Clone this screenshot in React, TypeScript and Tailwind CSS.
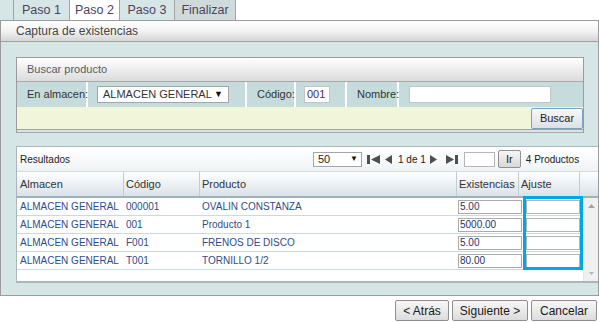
import React from 'react';

const tabs = [
  { label: 'Paso 1', w: 'w-[56px]', bg: '' },
  { label: 'Paso 2', w: 'w-[50px]', bg: 'bg-white' },
  { label: 'Paso 3', w: 'w-[55px]', bg: '' },
  { label: 'Finalizar', w: 'w-[62px] border-r', bg: 'bg-[#cfdbdb]' },
];

const rows = [
  { almacen: 'ALMACEN GENERAL', codigo: '000001', producto: 'OVALIN CONSTANZA', existencias: '5.00' },
  { almacen: 'ALMACEN GENERAL', codigo: '001', producto: 'Producto 1', existencias: '5000.00' },
  { almacen: 'ALMACEN GENERAL', codigo: 'F001', producto: 'FRENOS DE DISCO', existencias: '5.00' },
  { almacen: 'ALMACEN GENERAL', codigo: 'T001', producto: 'TORNILLO 1/2', existencias: '80.00' },
];

const Tri = ({ dir }: { dir: 'l' | 'r' }) => (
  <svg width="7" height="9" viewBox="0 0 7 9">
    <path d={dir === 'l' ? 'M7 0 L0 4.5 L7 9 Z' : 'M0 0 L7 4.5 L0 9 Z'} fill="#4f4f4f" />
  </svg>
);

const BtnGray = ({ children, w }: { children: React.ReactNode; w: string }) => (
  <button className={`${w} h-[21px] rounded-[2px] border border-[#8e8e8e] bg-linear-to-b from-[#f8f8f8] to-[#dcdcdc] text-[12px] text-[#1a1a1a] flex items-center justify-center`}>
    {children}
  </button>
);

export default function App() {
  return (
    <div className="w-[599px] h-[322px] overflow-hidden bg-white font-['Liberation_Sans',Arial,sans-serif] text-[11px] text-[#333]">
      {/* pestañas */}
      <div className="flex h-[20px]">
        <div className="flex bg-[#d6e5e5] pl-[13px]">
          {tabs.map((t) => (
            <div
              key={t.label}
              className={`${t.w} ${t.bg} h-[20px] flex items-center justify-center border-l border-[#a3a3a3] text-[12.5px] text-[#4d4360]`}
            >
              {t.label}
            </div>
          ))}
        </div>
      </div>

      {/* panel principal */}
      <div className="w-[599px] h-[276px] border border-[#9b9b9b] bg-[#d6e5e5] flex flex-col overflow-hidden">
        <div className="h-[21px] shrink-0 border-b border-[#a0a0a0] bg-linear-to-b from-white via-[#f3f3f3] to-[#d5d5d5] flex items-center pl-[15px] text-[12px] text-[#454545]">
          Captura de existencias
        </div>

        <div className="flex-1 pl-[15px] pt-[15px]">
          {/* Buscar producto */}
          <div className="w-[568px] border-x border-t border-[#9c9c9c]">
            <div className="h-[24px] border-b border-[#a8a8a8] bg-linear-to-b from-white to-[#dcdcdc] flex items-center pl-[10px] text-[11px] text-[#5a5a68]">
              Buscar producto
            </div>
            <div className="h-[25px] flex bg-[#c6dcdc] text-[11px] text-[#333] whitespace-nowrap">
              <div className="w-[71px] border-r-2 border-white flex items-center pl-[10px]">En almacen:</div>
              <div className="w-[159px] border-r-2 border-white flex items-center pl-[9px]">
                <div className="w-[132px] h-[17px] bg-white border border-[#a5a5a5] flex items-center justify-between pl-[5px] pr-[5px]">
                  <span>ALMACEN GENERAL</span>
                  <span className="text-[9px] text-[#111]">▼</span>
                </div>
              </div>
              <div className="w-[49px] border-r-2 border-white flex items-center pl-[10px]">Código:</div>
              <div className="w-[51px] border-r-2 border-white flex items-center pl-[8px]">
                <div className="w-[26px] h-[17px] bg-white border border-[#c4c4c4] flex items-center pl-[2px] text-[#3d2b6b]">001</div>
              </div>
              <div className="w-[52px] border-r-2 border-white flex items-center pl-[10px]">Nombre:</div>
              <div className="flex-1 flex items-center pl-[10px]">
                <div className="w-[142px] h-[17px] bg-white border border-[#c4c4c4]" />
              </div>
            </div>
            <div className="h-[23px] border-b border-[#a0a0a0] bg-[#f1f6da] flex justify-end items-start pt-[1px]">
              <button className="w-[52px] h-[21px] border border-[#7f9fc2] rounded-[2px] bg-linear-to-b from-[#f8f8f8] to-[#dde1e6] text-[11px] text-[#222] flex items-center justify-center">
                Buscar
              </button>
            </div>
            <div className="h-[3px] border-b border-[#a8a8a8]" />
          </div>

          {/* Resultados */}
          <div className="mt-[13px] w-[582px] border-l border-t border-b-2 border-[#a9b7bd] bg-white">
            <div className="h-[25px] flex items-center border-b border-[#d3dbe0] bg-linear-to-b from-white to-[#f0f3f5] text-[10px] text-[#222]">
              <div className="w-[296px] pl-[3px]">Resultados</div>
              <div className="w-[49px] h-[15px] border border-[#a5a5a5] bg-white flex items-center justify-between pl-[4px] pr-[3px] text-[11px]">
                <span>50</span>
                <span className="text-[8px] text-[#111]">▼</span>
              </div>
              <div className="ml-[5px] flex items-center">
                <div className="w-[3px] h-[9px] bg-[#4f4f4f]" />
                <div className="ml-[1px]">
                  <svg width="9" height="9" viewBox="0 0 9 9"><path d="M9 0 L0 4.5 L9 9 Z" fill="#4f4f4f" /></svg>
                </div>
              </div>
              <div className="ml-[5px]"><Tri dir="l" /></div>
              <span className="ml-[6px]">1 de 1</span>
              <div className="ml-[4px]"><Tri dir="r" /></div>
              <div className="ml-[9px] flex items-center">
                <svg width="8" height="9" viewBox="0 0 8 9"><path d="M0 0 L8 4.5 L0 9 Z" fill="#4f4f4f" /></svg>
                <div className="ml-[1px] w-[3px] h-[9px] bg-[#4f4f4f]" />
              </div>
              <div className="ml-[6px] w-[31px] h-[15px] border border-[#b5b5b5] bg-white" />
              <button className="ml-[3px] w-[23px] h-[18px] border border-[#909090] rounded-[2px] bg-linear-to-b from-[#f6f6f6] to-[#d9d9d9] text-[11px] text-[#222] flex items-center justify-center">
                Ir
              </button>
              <span className="ml-[5px]">4 Productos</span>
            </div>

            <div className="h-[26px] flex border-b-2 border-[#9fb2bb] bg-linear-to-b from-white to-[#dae2e8] text-[11px] text-[#333]">
              <div className="w-[107px] border-r border-[#c2ccd3] flex items-center pl-[3px]">Almacen</div>
              <div className="w-[76px] border-r border-[#c2ccd3] flex items-center pl-[2px]">Código</div>
              <div className="w-[257px] border-r border-[#c2ccd3] flex items-center pl-[2px]">Producto</div>
              <div className="w-[62px] border-r border-[#c2ccd3] flex items-center pl-[2px]">Existencias</div>
              <div className="w-[61px] border-r border-[#c2ccd3] flex items-center pl-[2px]">Ajuste</div>
            </div>

            <div className="relative flex h-[83px]">
              <div className="w-[566px]">
                {rows.map((r) => (
                  <div key={r.codigo} className="h-[18px] flex items-center border-b border-[#c9dae4] text-[10px] text-[#2d4c8e] whitespace-nowrap">
                    <div className="w-[107px] shrink-0 pl-[3px]">{r.almacen}</div>
                    <div className="w-[76px] shrink-0 pl-[2px]">{r.codigo}</div>
                    <div className="w-[257px] shrink-0 pl-[2px]">{r.producto}</div>
                    <div className="w-[62px] shrink-0 pl-[1px]">
                      <div className="w-[64px] h-[14px] border border-[#ababab] bg-white flex items-center pl-[1px] text-[#1f3366]">
                        {r.existencias}
                      </div>
                    </div>
                    <div className="w-[61px] shrink-0 pl-[7px]">
                      <div className="w-[54px] h-[14px] border border-[#b3b3b3] bg-white" />
                    </div>
                  </div>
                ))}
              </div>
              <div className="w-[15px] h-full bg-[#f0f0f0] border-l border-[#e4e4e4] flex flex-col items-center justify-between pt-[6px] pb-[6px]">
                <svg width="7" height="4" viewBox="0 0 7 4"><path d="M0 4 L3.5 0 L7 4 Z" fill="#a3a3a3" /></svg>
                <svg width="5" height="3" viewBox="0 0 5 3"><path d="M0 0 L2.5 3 L5 0 Z" fill="#b5b5b5" /></svg>
              </div>
              <div className="absolute left-[506px] top-[-2px] w-[60px] h-[74px] border-[3px] border-[#00a7e7]" />
            </div>
          </div>
        </div>
      </div>

      {/* botones */}
      <div className="mt-[4px] flex justify-end gap-[3px] pr-[2px]">
        <BtnGray w="w-[54px]">&lt; Atrás</BtnGray>
        <BtnGray w="w-[76px]">Siguiente &gt;</BtnGray>
        <BtnGray w="w-[66px]">Cancelar</BtnGray>
      </div>
    </div>
  );
}
